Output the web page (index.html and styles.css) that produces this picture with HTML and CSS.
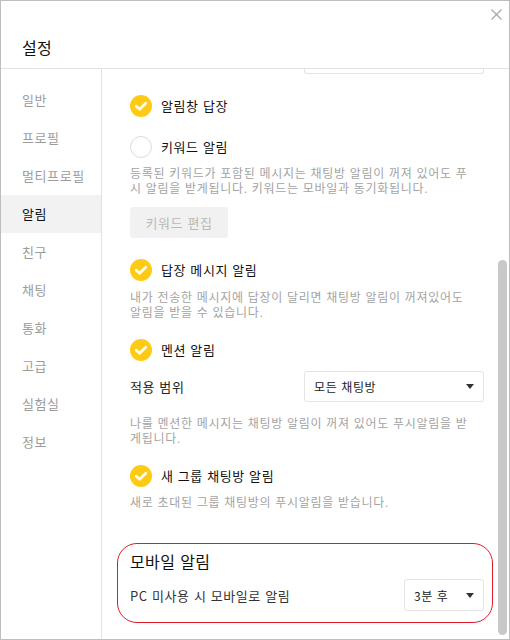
FILE: index.html
```html
<!DOCTYPE html>
<html lang="ko">
<head>
<meta charset="utf-8">
<title>설정</title>
<link rel="stylesheet" href="styles.css">
</head>
<body>
<div class="window">
  <header class="header">
    <h1 class="title">설정</h1>
    <button class="close" aria-label="닫기">
      <svg width="11" height="11" viewBox="0 0 11 11"><path d="M0.5 0.5 L10.5 10.5 M10.5 0.5 L0.5 10.5" stroke="#a6a6a6" stroke-width="1.2" fill="none"/></svg>
    </button>
  </header>
  <div class="body">
    <nav class="sidebar">
      <div class="nav-item">일반</div>
      <div class="nav-item">프로필</div>
      <div class="nav-item">멀티프로필</div>
      <div class="nav-item active">알림</div>
      <div class="nav-item">친구</div>
      <div class="nav-item">채팅</div>
      <div class="nav-item">통화</div>
      <div class="nav-item">고급</div>
      <div class="nav-item">실험실</div>
      <div class="nav-item">정보</div>
    </nav>
    <main class="main">
      <div class="scroll">
        <div class="select-fragment"></div>

        <div class="check-row r1">
          <span class="check on"><svg width="22" height="22" viewBox="0 0 22 22"><circle cx="11" cy="11" r="11" fill="#fdcb15"/><path d="M6.2 11.2 L9.6 14.3 L15.8 8.2" stroke="#fff" stroke-width="2.6" fill="none" stroke-linecap="round" stroke-linejoin="round"/></svg></span>
          <span class="label">알림창 답장</span>
        </div>

        <div class="check-row r2">
          <span class="check off"></span>
          <span class="label">키워드 알림</span>
        </div>
        <p class="desc d1">등록된 키워드가 포함된 메시지는 채팅방 알림이 꺼져 있어도 푸<br>시 알림을 받게됩니다. 키워드는 모바일과 동기화됩니다.</p>
        <div class="btn">키워드 편집</div>

        <div class="check-row r3">
          <span class="check on"><svg width="22" height="22" viewBox="0 0 22 22"><circle cx="11" cy="11" r="11" fill="#fdcb15"/><path d="M6.2 11.2 L9.6 14.3 L15.8 8.2" stroke="#fff" stroke-width="2.6" fill="none" stroke-linecap="round" stroke-linejoin="round"/></svg></span>
          <span class="label">답장 메시지 알림</span>
        </div>
        <p class="desc d2">내가 전송한 메시지에 답장이 달리면 채팅방 알림이 꺼져있어도<br>알림을 받을 수 있습니다.</p>

        <div class="check-row r4">
          <span class="check on"><svg width="22" height="22" viewBox="0 0 22 22"><circle cx="11" cy="11" r="11" fill="#fdcb15"/><path d="M6.2 11.2 L9.6 14.3 L15.8 8.2" stroke="#fff" stroke-width="2.6" fill="none" stroke-linecap="round" stroke-linejoin="round"/></svg></span>
          <span class="label">멘션 알림</span>
        </div>
        <div class="field-row">
          <span class="field-label">적용 범위</span>
          <div class="select wide"><span>모든 채팅방</span><span class="caret"></span></div>
        </div>
        <p class="desc d3">나를 멘션한 메시지는 채팅방 알림이 꺼져 있어도 푸시알림을 받<br>게됩니다.</p>

        <div class="check-row r5">
          <span class="check on"><svg width="22" height="22" viewBox="0 0 22 22"><circle cx="11" cy="11" r="11" fill="#fdcb15"/><path d="M6.2 11.2 L9.6 14.3 L15.8 8.2" stroke="#fff" stroke-width="2.6" fill="none" stroke-linecap="round" stroke-linejoin="round"/></svg></span>
          <span class="label">새 그룹 채팅방 알림</span>
        </div>
        <p class="desc d4">새로 초대된 그룹 채팅방의 푸시알림을 받습니다.</p>

        <section class="mobile">
          <h2 class="mobile-title">모바일 알림</h2>
          <div class="field-row mobile-row">
            <span class="field-label dark">PC 미사용 시 모바일로 알림</span>
            <div class="select narrow"><span>3분 후</span><span class="caret"></span></div>
          </div>
        </section>
      </div>
      <div class="track"><div class="thumb"></div></div>
    </main>
  </div>
</div>
</body>
</html>
```
FILE: styles.css
```css
* { box-sizing: border-box; }
html, body { margin: 0; padding: 0; background: #fff; }
body {
  font-family: "Noto Sans CJK KR", "Noto Sans", sans-serif;
  color: #111;
  letter-spacing: 0.6px;
}
.window {
  width: 510px;
  height: 640px;
  border: 1px solid #bdbdbd;
  display: flex;
  flex-direction: column;
  background: #fff;
  overflow: hidden;
}
.header {
  height: 68px;
  flex: none;
  border-bottom: 1px solid #e2e2e2;
  display: flex;
  justify-content: space-between;
  align-items: flex-start;
  padding: 0 7px 0 21px;
}
.title {
  margin: 35px 0 0;
  font-size: 16px;
  line-height: 22px;
  font-weight: 400;
  color: #111;
  letter-spacing: 0.3px;
}
.close {
  margin-top: 8px;
  padding: 0;
  border: 0;
  background: none;
  width: 11px;
  height: 11px;
  display: flex;
}
.body {
  flex: 1;
  display: flex;
  min-height: 0;
}
.sidebar {
  width: 101px;
  flex: none;
  border-right: 1px solid #e2e2e2;
  padding-top: 12px;
}
.nav-item {
  height: 38px;
  line-height: 38px;
  padding-left: 21px;
  font-size: 13px;
  color: #9c9c9c;
}
.nav-item.active {
  background: #f2f2f2;
  color: #111;
}
.main {
  flex: 1;
  display: flex;
  min-width: 0;
}
.scroll {
  flex: 1;
  overflow: hidden;
  padding: 0 12px 0 28px;
}
.select-fragment {
  width: 180px;
  height: 5px;
  margin-left: auto;
  border: 1px solid #e3e3e3;
  border-top: 0;
  border-radius: 0 0 3px 3px;
}
.check-row {
  display: flex;
  align-items: center;
  height: 22px;
  margin-top: 19px;
}
.check-row.r1 { margin-top: 21px; }
.check-row.r2 { margin-top: 19px; }
.check-row.r3 { margin-top: 21px; }
.check-row.r4 { margin-top: 18px; }
.check-row.r5 { margin-top: 18px; }
.check {
  width: 22px;
  height: 22px;
  flex: none;
  display: block;
}
.check svg { display: block; }
.check.off {
  border: 1px solid #dcdcdc;
  border-radius: 50%;
  background: #fff;
}
.label {
  margin-left: 9px;
  font-size: 13px;
  line-height: 22px;
  color: #111;
}
.desc {
  margin: 9px 0 0;
  font-family: "Liberation Sans", "Noto Sans CJK KR", sans-serif;
  font-size: 12px;
  line-height: 15px;
  letter-spacing: 0.7px;
  color: #a3a3a3;
  white-space: nowrap;
}
.desc.d1 { margin-top: 9px; }
.desc.d2 { margin-top: 10px; }
.desc.d3 { margin-top: 15px; }
.desc.d4 { margin-top: 9px; }
.btn {
  margin-top: 10px;
  width: 98px;
  height: 31px;
  border-radius: 3px;
  background: #f1f1f1;
  color: #b9b9b9;
  font-size: 13px;
  line-height: 31px;
  text-align: center;
}
.field-row {
  display: flex;
  align-items: center;
  justify-content: space-between;
  margin-top: 10px;
}
.field-label {
  font-size: 13px;
  color: #222;
}
.field-label.dark { color: #333; }
.select {
  height: 31px;
  border: 1px solid #e3e3e3;
  border-radius: 3px;
  display: flex;
  align-items: center;
  justify-content: space-between;
  padding: 0 9px 0 9px;
  font-size: 12px;
  color: #222;
  background: #fff;
}
.select.wide { width: 180px; }
.select.narrow { width: 80px; height: 32px; }
.caret {
  width: 0;
  height: 0;
  border-left: 4.5px solid transparent;
  border-right: 4.5px solid transparent;
  border-top: 5px solid #333;
}
.mobile {
  margin: 32px -9px 0 -13px;
  border: 1px solid #e01b2a;
  border-radius: 20px;
  padding: 6px 8px 11px 12px;
}
.mobile-title {
  margin: 0;
  font-size: 16px;
  line-height: 22px;
  font-weight: 400;
  color: #111;
  letter-spacing: 0.4px;
}
.mobile-row { margin-top: 7px; }
.track {
  width: 13px;
  flex: none;
  padding: 191px 2px 0 2px;
}
.thumb {
  width: 9px;
  height: 375px;
  background: #c8c8c8;
  border-radius: 5px;
}
```
